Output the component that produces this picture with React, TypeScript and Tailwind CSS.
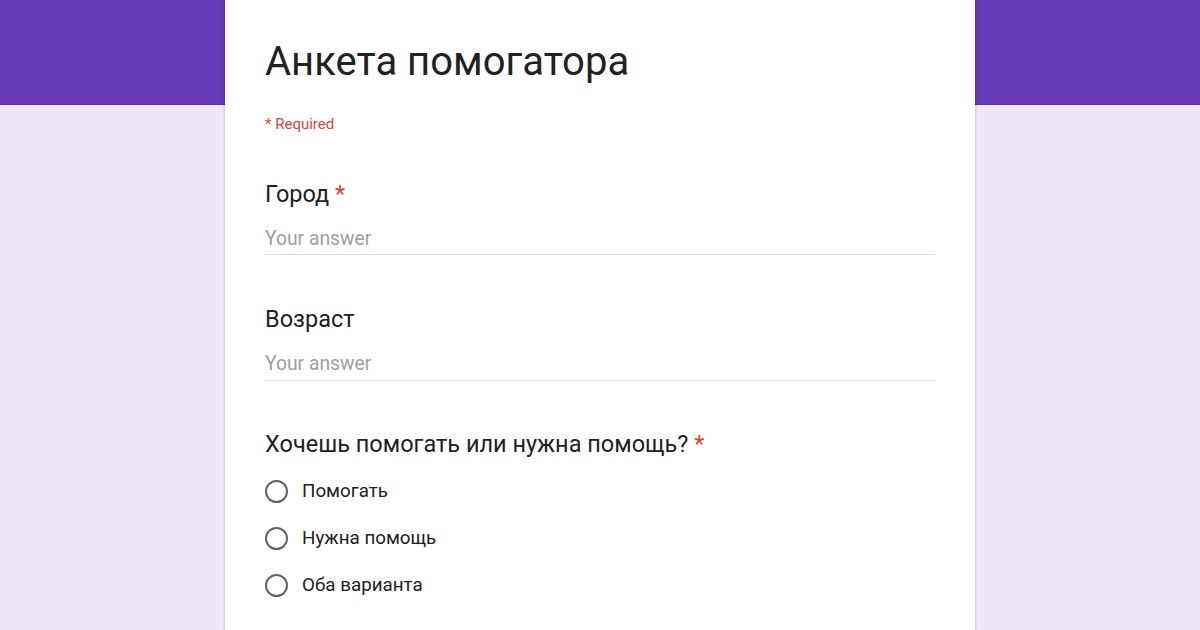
export default function App() {
  const options = ["Помогать", "Нужна помощь", "Оба варианта"];

  return (
    <div
      className="min-h-[630px] h-[630px] overflow-hidden bg-[linear-gradient(#673ab7_0,#673ab7_104px,#5e34a8_104px,#5e34a8_105px,#ede7f6_105px)]"
      style={{ fontFamily: "Roboto, 'Noto Sans', sans-serif" }}
    >
      <div className="mx-auto w-[750px] h-full bg-white shadow-[0_0_3px_rgba(0,0,0,0.25)] px-10 pt-[38px]">
        <h1 className="text-[40px] leading-[48px] text-[#202124]">Анкета помогатора</h1>
        <div className="mt-[28px] text-[15px] leading-[20px] text-[#db4437]">* Required</div>

        <div className="mt-[45px]">
          <div className="text-[23.5px] leading-[30px] text-[#202124]">
            Город <span className="text-[#db4437]">*</span>
          </div>
          <div className="mt-[18px] w-[670px] border-b border-[#e0e0e0] pb-[3px] text-[19.3px] leading-[24px] text-[#9e9e9e]">
            Your answer
          </div>
        </div>

        <div className="mt-[49px]">
          <div className="text-[23.5px] leading-[30px] text-[#202124]">Возраст</div>
          <div className="mt-[18px] w-[670px] border-b border-[#e0e0e0] pb-[4px] text-[19.3px] leading-[24px] text-[#9e9e9e]">
            Your answer
          </div>
        </div>

        <div className="mt-[48px]">
          <div className="text-[23.5px] leading-[30px] text-[#202124]">
            Хочешь помогать или нужна помощь? <span className="text-[#db4437]">*</span>
          </div>
          <div className="mt-[20px] flex flex-col gap-[23px]">
            {options.map((o) => (
              <div key={o} className="flex items-center gap-[14px]">
                <div className="w-[23px] h-[23px] rounded-full border-2 border-[#5f6368]" />
                <span className="text-[18.8px] leading-[24px] text-[#202124]">{o}</span>
              </div>
            ))}
          </div>
        </div>
      </div>
    </div>
  );
}
